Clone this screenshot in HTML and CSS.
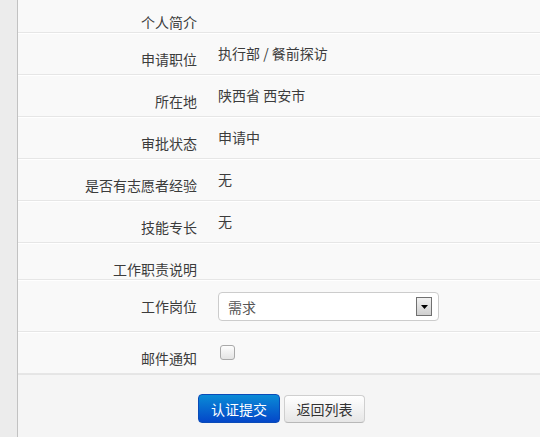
FILE: index.html
```html
<!DOCTYPE html>
<html lang="zh-CN">
<head>
<meta charset="utf-8">
<title>申请详情</title>
<link rel="stylesheet" href="styles.css">
</head>
<body>
<div class="page">
  <div class="sidebar"></div>
  <div class="main">
    <div class="form">
      <div class="row"><div class="label">个人简介</div></div>
      <div class="row"><div class="label">申请职位</div><div class="value">执行部 / 餐前探访</div></div>
      <div class="row"><div class="label">所在地</div><div class="value">陕西省 西安市</div></div>
      <div class="row"><div class="label">审批状态</div><div class="value">申请中</div></div>
      <div class="row"><div class="label">是否有志愿者经验</div><div class="value">无</div></div>
      <div class="row"><div class="label">技能专长</div><div class="value">无</div></div>
      <div class="row"><div class="label">工作职责说明</div></div>
      <div class="row">
        <div class="label">工作岗位</div>
        <div class="select">
          <span class="select-text">需求</span>
          <span class="select-arrow"><svg width="7" height="4" viewBox="0 0 7 4"><path d="M0 0H7L3.5 4Z" fill="#000"/></svg></span>
        </div>
      </div>
      <div class="row"><div class="label">邮件通知</div><div class="checkbox"></div></div>
    </div>
    <div class="actions">
      <button class="btn btn-primary">认证提交</button>
      <button class="btn btn-default">返回列表</button>
    </div>
  </div>
</div>
</body>
</html>
```
FILE: styles.css
```css
html, body {
  margin: 0;
  padding: 0;
  height: 100%;
  overflow: hidden;
}
body {
  font-family: "Noto Sans CJK SC", "Noto Sans", sans-serif;
  font-size: 14px;
  color: #3c3c3c;
  background: #f9f9f9;
}
.page {
  display: flex;
  height: 100%;
}
.sidebar {
  width: 17px;
  flex: none;
  background: #ececec;
  border-right: 1px solid #c2c2c2;
}
.main {
  flex: 1;
  display: flex;
  flex-direction: column;
  background: #f9f9f9;
}
.form {
  margin-top: -4px;
}
.row {
  display: flex;
  align-items: flex-start;
  border-bottom: 1px solid #e6e6e6;
  box-shadow: 0 1px 0 #fff;
}
.label {
  width: 179px;
  flex: none;
  text-align: right;
  padding-top: 17px;
  padding-bottom: 1px;
  line-height: 18px;
}
.value {
  margin-left: 21px;
  padding-top: 11px;
  padding-bottom: 12px;
  line-height: 18px;
}
.select {
  margin: 12px 0 10px 21px;
  width: 204px;
  height: 27px;
  border: 1px solid #ccc;
  border-radius: 4px;
  background: #fff;
  display: flex;
  align-items: center;
  justify-content: space-between;
  padding: 0 6px 0 9px;
}
.select-text {
  line-height: 18px;
  color: #555;
}
.select-arrow {
  width: 14px;
  height: 17px;
  border: 1px solid #707070;
  background: linear-gradient(#f2f2f2, #cfcfcf);
  display: flex;
  align-items: center;
  justify-content: center;
}
.checkbox {
  margin: 13px 0 13px 23px;
  width: 13px;
  height: 13px;
  border: 1px solid #a9a9a9;
  border-radius: 3px;
  background: linear-gradient(#fdfdfd, #e4e4e4);
}
.actions {
  flex: 1;
  background: #f5f5f5;
  border-top: 1px solid #e5e5e5;
  padding: 19px 0 0 180px;
  display: flex;
  align-items: flex-start;
  gap: 4px;
}
.btn {
  font-family: "Noto Sans CJK SC", "Noto Sans", sans-serif;
  font-size: 14px;
  line-height: 18px;
  border-radius: 4px;
  cursor: pointer;
  margin: 0;
  padding: 0;
}
.btn-primary {
  width: 82px;
  height: 29px;
  color: #fff;
  border: 1px solid #0a4bb8;
  background: linear-gradient(#0a8bd6, #0447c9);
}
.btn-default {
  width: 81px;
  height: 28px;
  margin-top: 1px;
  color: #333;
  border: 1px solid #cfcfcf;
  border-bottom-color: #b8b8b8;
  background: linear-gradient(#ffffff, #e6e6e6);
}
```
